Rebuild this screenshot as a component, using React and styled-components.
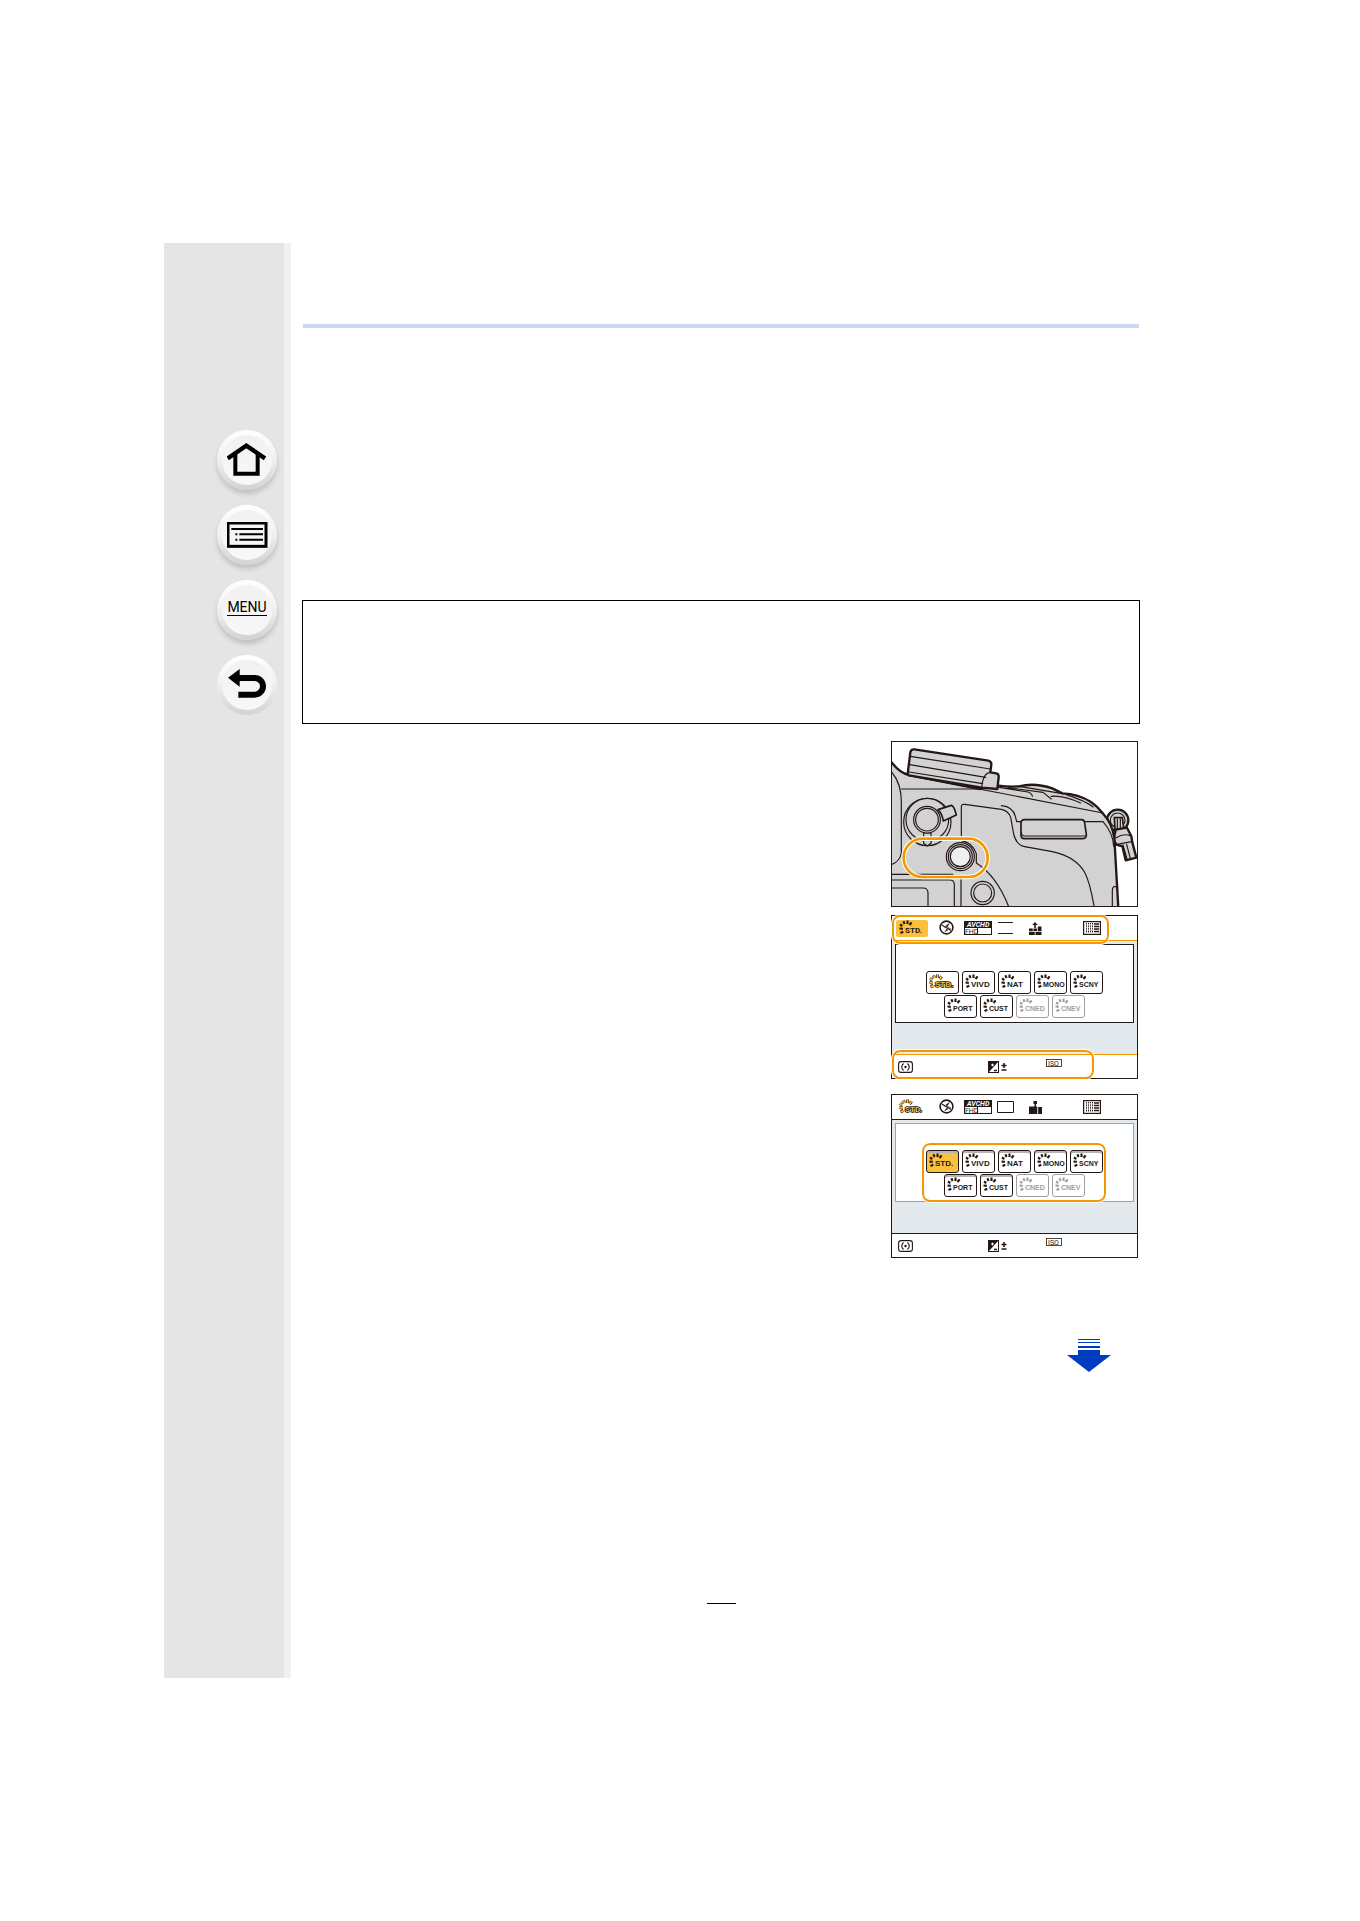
import styled, { createGlobalStyle, css } from "styled-components";

const INK = "#231815";
const ORANGE = "#f39800";
const AMBER = "#fbc13c";

const GlobalStyle = createGlobalStyle`
	* {
		box-sizing: border-box;
	}
	body {
		margin: 0;
		background-color: white;
		font-family: Roboto, "Liberation Sans", sans-serif;
	}
`;

const Page = styled.div`
	display: flex;
	padding: 243px 220px 243px 164px;
`;

const Sidebar = styled.nav`
	width: 127px;
	flex-shrink: 0;
	display: flex;
	flex-direction: column;
	gap: 15px;
	padding: 187px 0 0 53px;
	background-color: #e5e5e5;
	border-right: 7px solid #f1f1f1;
`;

const NavButton = styled.a`
	width: 60px;
	height: 60px;
	display: flex;
	align-items: center;
	justify-content: center;
	border-radius: 50%;
	background: linear-gradient(#ffffff, #f2f2f2 45%, #d2d2d2);
	box-shadow: ${(props) =>
		props.$flat ? "none" : "0 4px 5px rgba(0, 0, 0, 0.16)"};
	color: black;
	text-decoration: none;
`;

const NavFace = styled.span`
	width: 50px;
	height: 50px;
	display: flex;
	align-items: center;
	justify-content: center;
	border-radius: 50%;
	background: linear-gradient(#f1f1f1, #f8f8f8);
`;

const MenuLabel = styled.span`
	margin-bottom: 6px;
	border-bottom: 1px solid black;
	font-size: 14px;
	line-height: 16px;
`;

const Main = styled.main`
	flex: 1;
	min-width: 0;
	margin-left: 11px;
	padding: 81px 0 74px;
`;

const TitleRule = styled.hr`
	height: 4px;
	margin: 0 1px 272px;
	border: none;
	background-color: #cbd9f3;
`;

const NoteBox = styled.section`
	min-height: 124px;
	border: 1px solid black;
`;

const Figures = styled.div`
	display: flex;
	flex-direction: column;
	align-items: flex-end;
	padding: 17px 2px 0 0;
`;

const CameraFigure = styled.figure`
	width: 247px;
	height: 166px;
	margin: 0 0 8px;
	border: 1px solid ${INK};
	overflow: hidden;

	svg {
		display: block;
	}
`;

const Screen = styled.div`
	position: relative;
	width: 247px;
	height: 164px;
	display: flex;
	flex-direction: column;
	margin-bottom: 15px;
	border: 1px solid ${INK};
	background-color: #e3e9ed;
`;

const TopBar = styled.div`
	height: 25px;
	display: flex;
	align-items: center;
	padding-left: 4px;
	background-color: white;
	border-bottom: 1px solid ${(props) => props.$line};
`;

const BottomBar = styled.div`
	height: 24px;
	display: flex;
	align-items: flex-start;
	margin-top: auto;
	padding: 4px 0 0 6px;
	background-color: white;
	border-top: 1px solid ${(props) => props.$line};
`;

const Slot = styled.span`
	width: ${(props) => props.$width}px;
	height: 16px;
	display: flex;
	align-items: center;
	flex-shrink: 0;
`;

const Tiles = styled.div`
	height: 79px;
	display: flex;
	flex-direction: column;
	align-items: center;
	gap: 1px;
	margin: 3px 3px 0;
	padding-top: 26px;
	background-color: white;
	border: 1px solid ${(props) => props.$line};
`;

const TileRow = styled.div`
	display: flex;
	gap: 3px;
`;

const Tile = styled.button`
	width: 33px;
	height: 23px;
	display: flex;
	padding: 0;
	border: 1px solid ${INK};
	border-radius: 3px;
	background-color: ${(props) => (props.$active ? AMBER : "white")};
	${(props) =>
		props.$shaded &&
		css`
			box-shadow: inset 0 2px 0 #b5b5b6;
		`}

	&:disabled {
		border-color: #9fa0a0;
		box-shadow: none;
	}
`;

const Badge = styled.span`
	width: 32px;
	height: 17px;
	display: flex;
	align-items: center;
	justify-content: center;
	border-radius: 2px;
	background-color: ${(props) => (props.$plain ? "transparent" : AMBER)};
`;

const Highlight = styled.div`
	position: absolute;
	border: 2px solid ${ORANGE};
	border-radius: 8px;
	outline: 1px solid white;
	pointer-events: none;
`;

const TopHighlight = styled(Highlight)`
	top: -1px;
	left: 0;
	width: 217px;
	height: 29px;
`;

const BottomHighlight = styled(Highlight)`
	bottom: -1px;
	left: 0;
	width: 202px;
	height: 29px;
`;

const TilesHighlight = styled(Highlight)`
	top: 48px;
	left: 30px;
	width: 184px;
	height: 59px;
`;

const NextArrow = styled.a`
	display: block;
	width: 44px;
	height: 33px;
	margin: 66px 27px 0 0;
`;

const PageMark = styled.hr`
	width: 29px;
	height: 1px;
	margin: 231px auto 0;
	border: none;
	background-color: black;
`;

const HomeIcon = () => (
	<svg width="40" height="34" viewBox="2 6 120 102" fill="none">
		<path d="M4 52 60 14 116 52" stroke="black" strokeWidth="13" />
		<path d="M27 38V98H94V38" stroke="black" strokeWidth="12" />
	</svg>
);

const ListIcon = () => (
	<svg width="41" height="27" viewBox="2 2 123 81" fill="none">
		<rect x="5" y="5" width="114" height="70" stroke="black" strokeWidth="9" />
		<path
			d="M15 23H110M39 39H110M39 55H110M27 39h6M27 55h6"
			stroke="black"
			strokeWidth="6"
		/>
	</svg>
);

const BackIcon = () => (
	<svg width="39" height="32" viewBox="2 3 117 96">
		<path d="M2 29 37 3V56Z" />
		<path
			d="M33 30H82a22 22 0 0 1 0 50H33"
			fill="none"
			stroke="black"
			strokeWidth="18"
		/>
	</svg>
);

const RAYS =
	"M3 6.5 5.3 8M6.4 3.3 7.6 6M10.5 2.6V6M14.6 4.3 12.5 7M2.5 10.5 5.8 10.9M3.5 15 6.3 13.7";

const StyleMark = ({ label, color = INK, outlined }) => (
	<svg width="31" height="21" viewBox="0 0 31 21" aria-label={label}>
		<path
			d={RAYS}
			fill="none"
			stroke={outlined ? INK : color}
			strokeWidth={outlined ? 3 : 2.1}
		/>
		{outlined && <path d={RAYS} fill="none" stroke={AMBER} strokeWidth="1.8" />}
		<text
			x="8"
			y="15"
			fill={outlined ? AMBER : color}
			stroke={outlined ? INK : "none"}
			strokeWidth="1.6"
			paintOrder="stroke"
			fontSize={label === "STD." || label === "NAT" || label === "VIVD" ? 8 : 7}
			fontWeight="bold"
		>
			{label}
		</text>
	</svg>
);

const FlashOffIcon = () => (
	<svg width="16" height="16" viewBox="0 0 16 16">
		<circle cx="7.5" cy="7.5" r="6.4" fill="none" stroke={INK} strokeWidth="1.6" />
		<path d="M11 2.5 4.5 7.5 8 8.5 5 12.5 12 8.5 8.5 7Z" fill={INK} />
		<path d="M2.8 5 12.2 10.5" stroke="white" strokeWidth="2" />
		<path d="M2.8 5 12.2 10.5" stroke={INK} strokeWidth="1.2" />
	</svg>
);

const FormatIcon = () => (
	<svg width="28" height="14" viewBox="0 0 28 14">
		<rect width="28" height="14" fill={INK} />
		<rect x="14" y="7" width="13" height="6" fill="white" />
		<rect x="1" y="7" width="12" height="6" fill="white" />
		<text x="3" y="6" fill="white" fontSize="7" fontWeight="bold" fontStyle="italic">
			AVCHD
		</text>
		<text x="1" y="13" fill={INK} fontSize="7">
			FHD
		</text>
	</svg>
);

const SizeIcon = ({ open }) => (
	<svg width="17" height="12" viewBox="0 0 17 12" fill="none" stroke={INK}>
		<path d={open ? "M1 .5H16M1 11.5H16" : "M.5 .5H16.5V11.5H.5Z"} />
	</svg>
);

const MonitorIcon = ({ joined }) => (
	<svg width="13" height="13" viewBox="0 0 13 13" fill={INK}>
		{joined ? (
			<path d="M4.5 0H8V3H7V5.5H8.3V13H0V5.5H5.5V3H4.5ZM9.2 6H13V13H9.2Z" />
		) : (
			<path d="M6 0 8.8 3H6.8V6H5.2V3H3.2ZM0 6.5H3.7V9H0ZM4.4 6.5H8V9H4.4ZM8.8 4.5H12.5V9H8.8ZM0 9.8H5.7V13H0ZM6.5 9.8H12.5V13H6.5Z" />
		)}
	</svg>
);

const GridIcon = () => (
	<svg width="18" height="14" viewBox="0 0 18 14" fill="none" stroke={INK}>
		<rect x=".6" y=".6" width="16.8" height="12.8" strokeWidth="1.2" />
		<path d="M3.5 2V12M5.5 2V12M7.5 2V12M9.5 2V12" strokeDasharray="1 .6" />
		<path d="M11 3H16M11 5.5H16M11 8H16M11 10.5H16" strokeWidth="1.3" />
	</svg>
);

const MeteringIcon = () => (
	<svg width="15" height="12" viewBox="0 0 15 12" fill="none" stroke={INK}>
		<rect x=".6" y=".6" width="13.8" height="10.8" rx="2.5" strokeWidth="1.1" />
		<path d="M5.5 2.5Q2 6 5.5 9.5M9.5 2.5Q13 6 9.5 9.5" strokeWidth="1.1" />
		<circle cx="7.5" cy="6" r="1.2" fill={INK} stroke="none" />
	</svg>
);

const ExposureIcon = () => (
	<svg width="20" height="13" viewBox="0 0 20 13">
		<rect x=".5" y=".5" width="10" height="11" fill="white" stroke={INK} />
		<path d="M1 1H10L1 11Z" fill={INK} />
		<path d="M3 4H6M4.5 2.7V5.3" stroke="white" />
		<path d="M6 9.5H9M13.5 4.5H18.5M16 2V7M13.5 9H18.5" stroke={INK} strokeWidth="1.5" />
	</svg>
);

const IsoIcon = () => (
	<svg width="16" height="8" viewBox="0 0 16 8">
		<rect x=".5" y=".5" width="15" height="7" fill="white" stroke={INK} strokeWidth=".8" />
		<text x="2" y="6.5" fill={INK} fontSize="7">
			ISO
		</text>
	</svg>
);

const ArrowIcon = () => (
	<svg width="44" height="33" viewBox="0 0 44 33" fill="#003cc0">
		<path d="M11 0H33V1H11ZM11 3H33V4H11ZM11 7H33V9H11Z" />
		<path d="M11 11H33V16H44L22 33 0 16H11Z" />
	</svg>
);

const CameraDrawing = () => (
	<svg width="245" height="164" viewBox="37 37 735 492">
		<g
			fill="#d2d2d2"
			stroke={INK}
			strokeWidth="3.5"
			strokeLinejoin="round"
			strokeLinecap="round"
		>
			{/* strap lug */}
			<circle cx="714" cy="272" r="32" strokeWidth="7" />
			<circle cx="714" cy="272" r="22" />
			<path d="M704 264 728 264 732 296 706 300Z" strokeWidth="5" />
			<path d="M713 268V296M722 268V296" />
			<path
				d="M708 300 742 294 755 320 758 338 770 384 738 392 728 350 710 345 702 330Z"
				strokeWidth="7"
			/>
			<path
				d="M709 325Q730 310 752 318M712 344 756 336M741 344 752 387M730 346 742 388"
				fill="none"
			/>
			{/* body outline */}
			<path
				d="M30 90Q58 130 88 136L302 178 330 168 357 168Q386 172 418 170Q465 158 518 176L548 191Q597 193 634 217Q655 231 671 253Q698 282 704 325L716 535H30Z"
				strokeWidth="7"
			/>
			<path
				d="M65 178 302 178M88 137 670 250M315 177 340 170 445 187Q458 192 458 200M385 174 490 188 515 208M418 170 548 192M515 200Q550 196 603 220M560 195Q620 215 640 232"
				fill="none"
			/>
			{/* hot shoe */}
			<path
				d="M84 133 92 68Q94 58 104 59L326 93Q336 96 335 105L332 128 350 131Q358 133 357 143L353 178 306 174 88 137Z"
				strokeWidth="7"
			/>
			<path
				d="M92 80 332 118M90 105 318 143M88 127 309 162M306 174Q310 130 332 128"
				fill="none"
			/>
			{/* left edge, grip line */}
			<path
				d="M34 125Q66 160 65 220V370Q60 397 34 405M245 319V231Q245 223 255 224L365 239Q386 243 393 263L402 313Q410 346 435 351L518 366Q590 382 616 430Q630 457 643 528M365 228Q400 231 407 260L411 276 670 276M670 276Q700 310 702 350"
				fill="none"
			/>
			<path d="M434 270H606Q614 270 615 280L620 314Q621 327 610 327H434Q424 327 424 317V281Q424 270 434 270Z" strokeWidth="5" />
			<path d="M425 308Q425 319 434 319H619" fill="none" />
			{/* dial */}
			<circle cx="143" cy="277" r="71" />
			<circle cx="143" cy="270" r="64" />
			<path d="M132 310H154V341L143 349 132 341Z" />
			<circle cx="142" cy="270" r="40" />
			<circle cx="142" cy="270" r="34" />
			<path d="M175 240 215 227Q224 230 230 256L191 274Q187 251 175 240Z" strokeWidth="5" />
			{/* lower left buttons and monitor */}
			<path
				d="M34 434H220M34 451H210Q224 451 224 465V528M244 450V528M34 475H130Q145 475 145 490V528M245 333Q278 338 290 372V400Q350 438 386 528"
				fill="none"
			/>
			<rect x="72" y="327" width="252" height="115" rx="57" fill="none" stroke="white" strokeWidth="14" />
			<rect x="72" y="327" width="252" height="115" rx="57" fill="none" stroke={ORANGE} strokeWidth="8" />
			<circle cx="242" cy="381" r="42" />
			<circle cx="242" cy="381" r="36" />
			<circle cx="242" cy="381" r="30" fill="#eef0f0" />
			<circle cx="309" cy="490" r="35" />
			<circle cx="309" cy="490" r="27" />
			<path d="M714 471H704Q698 472 698 484V528" fill="none" />
		</g>
	</svg>
);

const firstRow = ["STD.", "VIVD", "NAT", "MONO", "SCNY"];
const secondRow = ["PORT", "CUST", "CNED", "CNEV"];

const StyleTile = ({ label, selecting }) => {
	const disabled = label.startsWith("CN");
	const isStandard = label === "STD.";
	return (
		<Tile
			type="button"
			disabled={disabled}
			$active={isStandard && selecting}
			$shaded={selecting}
		>
			<StyleMark
				label={label}
				color={disabled ? "#9fa0a0" : INK}
				outlined={isStandard && !selecting}
			/>
		</Tile>
	);
};

const CameraScreen = ({ selecting }) => {
	const barLine = selecting ? INK : ORANGE;
	return (
		<Screen>
			<TopBar $line={barLine}>
				<Slot $width={43}>
					<Badge $plain={selecting}>
						<StyleMark label="STD." outlined={selecting} />
					</Badge>
				</Slot>
				<Slot $width={25}>
					<FlashOffIcon />
				</Slot>
				<Slot $width={33}>
					<FormatIcon />
				</Slot>
				<Slot $width={32}>
					<SizeIcon open={!selecting} />
				</Slot>
				<Slot $width={54}>
					<MonitorIcon joined={selecting} />
				</Slot>
				<GridIcon />
			</TopBar>
			<Tiles $line={selecting ? ORANGE : INK}>
				<TileRow>
					{firstRow.map((label) => (
						<StyleTile key={label} label={label} selecting={selecting} />
					))}
				</TileRow>
				<TileRow>
					{secondRow.map((label) => (
						<StyleTile key={label} label={label} selecting={selecting} />
					))}
				</TileRow>
			</Tiles>
			<BottomBar $line={barLine}>
				<Slot $width={90}>
					<MeteringIcon />
				</Slot>
				<Slot $width={58}>
					<ExposureIcon />
				</Slot>
				<IsoIcon />
			</BottomBar>
			{selecting ? (
				<TilesHighlight />
			) : (
				<>
					<TopHighlight />
					<BottomHighlight />
				</>
			)}
		</Screen>
	);
};

const App = () => {
	return (
		<Page>
			<GlobalStyle />
			<Sidebar>
				<NavButton href="#home" aria-label="Home">
					<NavFace>
						<HomeIcon />
					</NavFace>
				</NavButton>
				<NavButton href="#contents" aria-label="Contents">
					<NavFace>
						<ListIcon />
					</NavFace>
				</NavButton>
				<NavButton href="#menu">
					<NavFace>
						<MenuLabel>MENU</MenuLabel>
					</NavFace>
				</NavButton>
				<NavButton href="#back" aria-label="Back" $flat>
					<NavFace>
						<BackIcon />
					</NavFace>
				</NavButton>
			</Sidebar>
			<Main>
				<TitleRule />
				<NoteBox />
				<Figures>
					<CameraFigure>
						<CameraDrawing />
					</CameraFigure>
					<CameraScreen />
					<CameraScreen selecting />
					<NextArrow href="#next" aria-label="Next page">
						<ArrowIcon />
					</NextArrow>
				</Figures>
				<PageMark />
			</Main>
		</Page>
	);
};

export default App;
